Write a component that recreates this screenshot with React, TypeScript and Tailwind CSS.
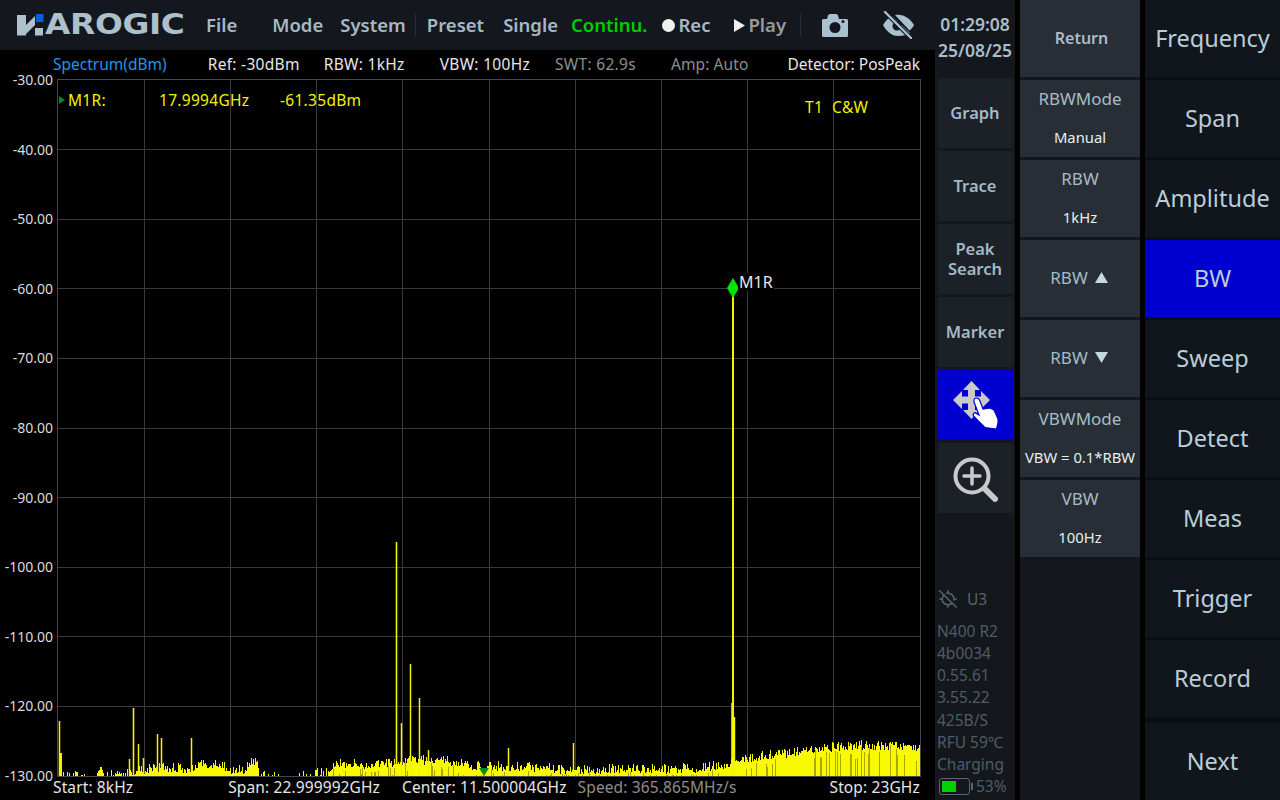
import { LocateOff } from "lucide-react";

const FONT = "font-['Noto_Sans','Open_Sans',sans-serif]";

function rng(seed: number) {
  let s = seed;
  return () => {
    s = (s * 1664525 + 1013904223) % 4294967296;
    return s / 4294967296;
  };
}

const ENV: [number, number][] = [
  [58, 776], [62, 776], [70, 773], [78, 775], [96, 776], [98, 766], [101, 767], [104, 775], [128, 772], [145, 768],
  [165, 766], [190, 768], [200, 762], [220, 764], [230, 768], [245, 768], [250, 761], [258, 758], [259, 774], [270, 775],
  [292, 776], [300, 775], [315, 773], [330, 767], [340, 762], [370, 763], [400, 760], [440, 758], [480, 765], [520, 765],
  [560, 768], [640, 768], [700, 767], [732, 762], [740, 758], [760, 755], [800, 750], [830, 746], [860, 744], [920, 745],
];

function envAt(x: number) {
  for (let i = 1; i < ENV.length; i++) {
    if (x <= ENV[i][0]) {
      const [x0, y0] = ENV[i - 1];
      const [x1, y1] = ENV[i];
      return y0 + ((y1 - y0) * (x - x0)) / Math.max(1, x1 - x0);
    }
  }
  return 745;
}

const SPIKES: [number, number, number][] = [
  [59.500, 721, 1.500], [60.500, 753, 3], [133.500, 708, 1.600], [138.500, 744, 1.500], [129.500, 759, 1.500], [143.500, 758, 1.500], [157.500, 734, 1.500], [161.500, 738, 1.500],
  [191.500, 738, 1.500], [396.500, 542, 1.600], [401.500, 723, 1.500], [410.500, 664, 1.500], [419.500, 698, 1.500], [428.500, 750, 1.500], [508.500, 748, 1.500], [573.500, 743, 1.500],
  [733, 296, 2], [732.500, 703, 2.500], [733.500, 717, 3.500],
];

function buildTrace() {
  const r = rng(17);
  let bright = "";
  let dim = "";
  for (let x = 58.5; x < 920; x += 1) {
    const top = envAt(x);
    const depth = 776 - top;
    if (depth < 0.5) continue;
    if (x < 330 && x > 262 && r() < 0.4) continue;
    const v = r();
    const y = top + (v < 0.3 ? -4 * r() : r() * 6);
    bright += `M${x} 776V${Math.min(775.5, y).toFixed(1)}`;
    if (x > 330 && r() < 0.16) dim += `M${x} 776V${Math.min(775, y + 2 + r() * 10).toFixed(1)}`;
  }
  return { bright, dim };
}

const TRACE = buildTrace();

const DB = ["-30.00", "-40.00", "-50.00", "-60.00", "-70.00", "-80.00", "-90.00", "-100.00", "-110.00", "-120.00", "-130.00"];

function Spectrum() {
  const idx = Array.from({ length: 9 }, (_, i) => i + 1);
  return (
    <svg viewBox="58 80 862 696" className="w-[862px] h-[696px] block">
      <g shapeRendering="crispEdges">
        {idx.map((i) => (
          <line key={i} x1={58} x2={920} y1={80 + i * 69.6} y2={80 + i * 69.6} stroke="#36393e" strokeWidth={1} />
        ))}
        {idx.map((i) => (
          <line key={i} y1={80} y2={776} x1={58 + i * 86.2} x2={58 + i * 86.2} stroke="#36393e" strokeWidth={1} />
        ))}
        <path d={TRACE.bright} stroke="#f9f900" strokeWidth={1} fill="none" />
        <path d={TRACE.dim} stroke="#a8a800" strokeWidth={1} fill="none" />
      </g>
      {SPIKES.map(([x, y, w], i) => (
        <line key={i} x1={x} x2={x} y1={y} y2={776} stroke="#f4f400" strokeWidth={w} />
      ))}
      <polygon points="733,278 739,288 733,298 727,288" fill="#00e400" />
      <polygon points="479,768 489,768 484,776" fill="#0a8a1a" />
    </svg>
  );
}

function Logo() {
  return (
    <div className="flex items-center w-[166px] h-[24px]">
      <svg viewBox="0 0 28 22" className="w-[28px] h-[22px] shrink-0">
        <rect x="0" y="1" width="9" height="20.500" fill="#aec0cc" />
        <polygon points="9,11 18,2 18,11 9,20" fill="#aec0cc" />
        <rect x="18" y="14" width="8" height="7.500" fill="#aec0cc" />
        <rect x="19" y="0" width="7.500" height="8" fill="#0a5fd6" />
      </svg>
      <span className="font-['DejaVu_Sans',sans-serif] font-bold text-[28px] leading-none text-[#aec0cc] origin-left scale-x-[1.17] tracking-[-0.3px]">
        AROGIC
      </span>
    </div>
  );
}

function Camera() {
  return (
    <svg viewBox="0 0 26 23" className="w-[26px] h-[23px]">
      <path fill="#a9c0d0" d="M1.500 5H5l1-3.500Q6.500 0 8 0h6q1.500 0 2 1.500L17 5h7.500Q26 5 26 6.500v15q0 1.500-1.500 1.500h-23Q0 23 0 21.500v-15Q0 5 1.500 5Z" />
      <circle cx="13" cy="13.500" r="5.500" fill="#14181e" />
      <circle cx="21" cy="7.500" r="1.500" fill="#14181e" />
    </svg>
  );
}

function EyeOff() {
  return (
    <svg viewBox="0 0 32 28" className="w-[32px] h-[28px]">
      <path fill="#a9c0d0" d="M1 14C4 9 7 6.500 10.500 5.500L28 22c-3 2-7 3-12 3C9 25 4.500 20 1 14Z" />
      <path fill="#a9c0d0" d="M13 4c1-.2 2-.3 3-.3 7 0 12.500 4.500 16 10.300-1 2-2.500 4-4.500 5.500Z" />
      <circle cx="15" cy="15" r="4.500" fill="#14181e" />
      <path d="M3 1 29 27" stroke="#14181e" strokeWidth="4.500" />
      <path d="M3 1 29 27" stroke="#a9c0d0" strokeWidth="2.400" strokeLinecap="round" />
    </svg>
  );
}

function MoveHand() {
  return (
    <svg viewBox="0 0 75 70" className="w-[75px] h-[70px]">
      <polygon
        fill="#c9c9cb"
        points="33.500,11 42,20 37,20 37,26.500 43,26.500 43,21 52,30 43,39 43,33.500 37,33.500 37,40 42,40 33.500,49 25,40 30,40 30,33.500 24,33.500 24,39 15,30 24,21 24,26.500 30,26.500 30,20 25,20"
      />
      <path
        fill="#ffffff"
        stroke="#0000d0"
        strokeWidth="1.200"
        d="M36 32Q35.500 28 38.500 28 41 28 42 31L45 39 52 38 56 40 60 49Q60.500 55 58 59L47 57.500Q41 52 35.500 46 34.500 43.500 37 42.500L41 45Z"
      />
    </svg>
  );
}

function ZoomPlus() {
  return (
    <svg viewBox="0 0 46 46" className="w-[46px] h-[46px] ml-[2px] mt-[3px]" fill="none" stroke="#c9c9cb">
      <circle cx="19" cy="19" r="16.500" strokeWidth="4" />
      <path d="M11 19h16M19 11v16" strokeWidth="3.500" strokeLinecap="round" />
      <path d="M32 32l10 10" strokeWidth="6" strokeLinecap="round" />
    </svg>
  );
}

function SideBtn({ children, active }: { children: React.ReactNode; active?: boolean }) {
  return (
    <div
      className={`h-[70px] w-[75px] flex items-center justify-center text-center text-[16.500px] leading-[20px] font-semibold text-[#a5b8c5] ${
        active ? "bg-[#0000d0]" : "bg-[#1c2127]"
      }`}
    >
      {children}
    </div>
  );
}

function SubBtn({ top, bottom }: { top: React.ReactNode; bottom?: string }) {
  return (
    <div className="h-[77px] w-[120px] bg-[#272e35] flex flex-col items-center justify-center text-[#a9bbc6]">
      {bottom ? (
        <>
          <div className="text-[17px] leading-[22px] mt-[-2px]">{top}</div>
          <div className="text-[14.800px] leading-[20px] text-[#e8eef2] mt-[17px] whitespace-nowrap">{bottom}</div>
        </>
      ) : (
        <div className="text-[17px] leading-[22px] flex items-center gap-[7px] pb-[2px] pr-[2px]">{top}</div>
      )}
    </div>
  );
}

function MainBtn({ label, active, h = "h-[77px]" }: { label: string; active?: boolean; h?: string }) {
  return (
    <div
      className={`${h} w-[135px] flex items-center justify-center text-[23.500px] leading-none text-[#b9cdd9] ${
        active ? "bg-[#0000d0]" : "bg-[#10161c]"
      }`}
    >
      {label}
    </div>
  );
}

function Triangle({ down }: { down?: boolean }) {
  return (
    <svg viewBox="0 0 13 11" className="w-[13px] h-[11px]">
      <polygon points={down ? "0,0 13,0 6.500,11" : "6.500,0 13,11 0,11"} fill="#c4d8e2" />
    </svg>
  );
}

const MENU = "text-[18.500px] font-semibold leading-none text-[#a5b8c5]";
const YEL = "absolute text-[15.500px] leading-[18px] tracking-[0.3px] text-[#f2f200] whitespace-nowrap";

export default function App() {
  return (
    <div className={`w-[1280px] h-[800px] bg-black flex overflow-hidden ${FONT}`}>
      <div className="w-[935px] flex flex-col shrink-0">
        <header className="h-[50px] bg-[#14181e] flex items-center pl-[17px] whitespace-nowrap">
          <Logo />
          <span className={`${MENU} ml-[23px]`}>File</span>
          <span className={`${MENU} ml-[35px]`}>Mode</span>
          <span className={`${MENU} ml-[17px]`}>System</span>
          <span className="w-px h-[22px] bg-[#2a2f35] ml-[9px]" />
          <span className={`${MENU} ml-[11px]`}>Preset</span>
          <span className={`${MENU} ml-[19px]`}>Single</span>
          <span className="text-[18.500px] font-semibold leading-none text-[#00cc00] ml-[13px]">Continu.</span>
          <span className="w-[13px] h-[13px] rounded-full bg-[#f0f0f0] ml-[15px]" />
          <span className={`${MENU} ml-[3px]`}>Rec</span>
          <svg viewBox="0 0 11 13" className="w-[11px] h-[13px] ml-[24px]">
            <polygon points="0,0 11,6.500 0,13" fill="#f0f0f0" />
          </svg>
          <span className="text-[18.500px] font-semibold leading-none text-[#9a9a9a] ml-[3px]">Play</span>
          <span className="w-px h-[22px] bg-[#2a2f35] ml-[14px]" />
          <span className="ml-[21px] flex"><Camera /></span>
          <span className="ml-[34px] flex"><EyeOff /></span>
        </header>

        <div className="h-[30px] relative text-[15.500px] leading-none whitespace-nowrap flex items-center pb-[1px] text-[#e6e6e6]">
          <span className="ml-[53px] text-[#2196e8]">Spectrum(dBm)</span>
          <span className="ml-[41px] tracking-[0.3px]">Ref: -30dBm</span>
          <span className="ml-[24px] tracking-[0.3px]">RBW: 1kHz</span>
          <span className="ml-[35px] tracking-[0.3px]">VBW: 100Hz</span>
          <span className="ml-[25px] tracking-[0.3px] text-[#8e8e8e]">SWT: 62.9s</span>
          <span className="ml-[35px] tracking-[0.1px] text-[#8e8e8e]">Amp: Auto</span>
          <span className="ml-[39px]">Detector: PosPeak</span>
        </div>

        <div className="h-[696px] flex relative">
          <div className="w-[58px] h-[710px] -my-[7px] pr-[5px] flex flex-col justify-between items-end text-[14px] leading-[14px] text-[#dcdcdc] shrink-0">
            {DB.map((d) => (
              <span key={d} className="h-[14px]">{d}</span>
            ))}
          </div>
          <div className="relative w-[862px] h-[696px] border border-[#45484d] box-content -mt-px -ml-px">
            <Spectrum />
            <svg viewBox="0 0 6 8" className="absolute left-[1px] top-[16px] w-[6px] h-[8px]">
              <polygon points="0,0 6,4 0,8" fill="#0a8a1a" />
            </svg>
            <div className={`${YEL} left-[10px] top-[11px]`}>M1R:</div>
            <div className={`${YEL} left-[101px] top-[11px]`}>17.9994GHz</div>
            <div className={`${YEL} left-[222px] top-[11px]`}>-61.35dBm</div>
            <div className={`${YEL} left-[747px] top-[18px]`}>T1</div>
            <div className={`${YEL} left-[774px] top-[18px]`}>C&amp;W</div>
            <div className="absolute left-[680px] top-[193px] text-[16px] leading-[18px] text-[#e6e6e6] bg-black px-px">M1R</div>
          </div>
        </div>

        <div className="flex-1 flex items-center text-[15.500px] leading-none tracking-[0.12px] whitespace-nowrap text-[#e6e6e6] pb-px">
          <span className="ml-[53px]">Start: 8kHz</span>
          <span className="ml-[95px]">Span: 22.999992GHz</span>
          <span className="ml-[22px]">Center: 11.500004GHz</span>
          <span className="ml-[11px] text-[#8e8e8e]">Speed: 365.865MHz/s</span>
          <span className="ml-[93px]">Stop: 23GHz</span>
        </div>
      </div>

      <aside className="w-[80px] shrink-0 bg-[#14171c] flex flex-col items-center">
        <div className="h-[78px] w-full flex flex-col items-center justify-start pt-[11px] text-[17.500px] font-semibold leading-[26px] text-[#aabdca]">
          <span>01:29:08</span>
          <span>25/08/25</span>
        </div>
        <div className="flex flex-col gap-[3px]">
          <SideBtn>Graph</SideBtn>
          <SideBtn>Trace</SideBtn>
          <SideBtn>
            <span>Peak<br />Search</span>
          </SideBtn>
          <SideBtn>Marker</SideBtn>
          <SideBtn active><MoveHand /></SideBtn>
          <SideBtn><ZoomPlus /></SideBtn>
        </div>
        <div className="flex-1 w-full flex flex-col justify-end pl-[2px] pb-[3px] text-[15.500px] leading-[22.150px] text-[#4f5c67] whitespace-nowrap">
          <div className="flex items-center gap-[9px] mb-[10px] pl-[1px] text-[#56646f] h-[22px]">
            <LocateOff className="w-[20px] h-[20px]" strokeWidth={1.800} />
            <span>U3</span>
          </div>
          <span>N400 R2</span>
          <span>4b0034</span>
          <span>0.55.61</span>
          <span>3.55.22</span>
          <span>425B/S</span>
          <span>RFU 59℃</span>
          <span>Charging</span>
          <div className="flex items-center h-[22px] pl-[2px]">
            <div className="w-[31px] h-[17px] border-[1.500px] border-[#5b6873] rounded-[3px] p-[2px]">
              <div className="w-[14px] h-full bg-[#00d000]" />
            </div>
            <div className="w-[2px] h-[7px] bg-[#5b6873] ml-[1px]" />
            <span className="ml-[3px]">53%</span>
          </div>
        </div>
      </aside>

      <div className="w-[5px] shrink-0" />

      <section className="w-[120px] shrink-0 bg-[#14171b] flex flex-col gap-[3px]">
        <div className="h-[77px] w-[120px] bg-[#272e35] flex items-center justify-center text-[16px] font-semibold text-[#aabdca] pb-[2px] pl-[3px]">Return</div>
        <SubBtn top="RBWMode" bottom="Manual" />
        <SubBtn top="RBW" bottom="1kHz" />
        <SubBtn top={<>RBW <Triangle /></>} />
        <SubBtn top={<>RBW <Triangle down /></>} />
        <SubBtn top="VBWMode" bottom="VBW = 0.1*RBW" />
        <SubBtn top="VBW" bottom="100Hz" />
      </section>

      <div className="w-[5px] shrink-0" />

      <nav className="w-[135px] shrink-0 bg-[#0b0e12] flex flex-col gap-[3px]">
        <MainBtn label="Frequency" />
        <MainBtn label="Span" />
        <MainBtn label="Amplitude" />
        <MainBtn label="BW" active />
        <MainBtn label="Sweep" />
        <MainBtn label="Detect" />
        <MainBtn label="Meas" />
        <MainBtn label="Trigger" />
        <MainBtn label="Record" />
        <MainBtn label="Next" h="flex-1 mt-[3px]" />
      </nav>
    </div>
  );
}
